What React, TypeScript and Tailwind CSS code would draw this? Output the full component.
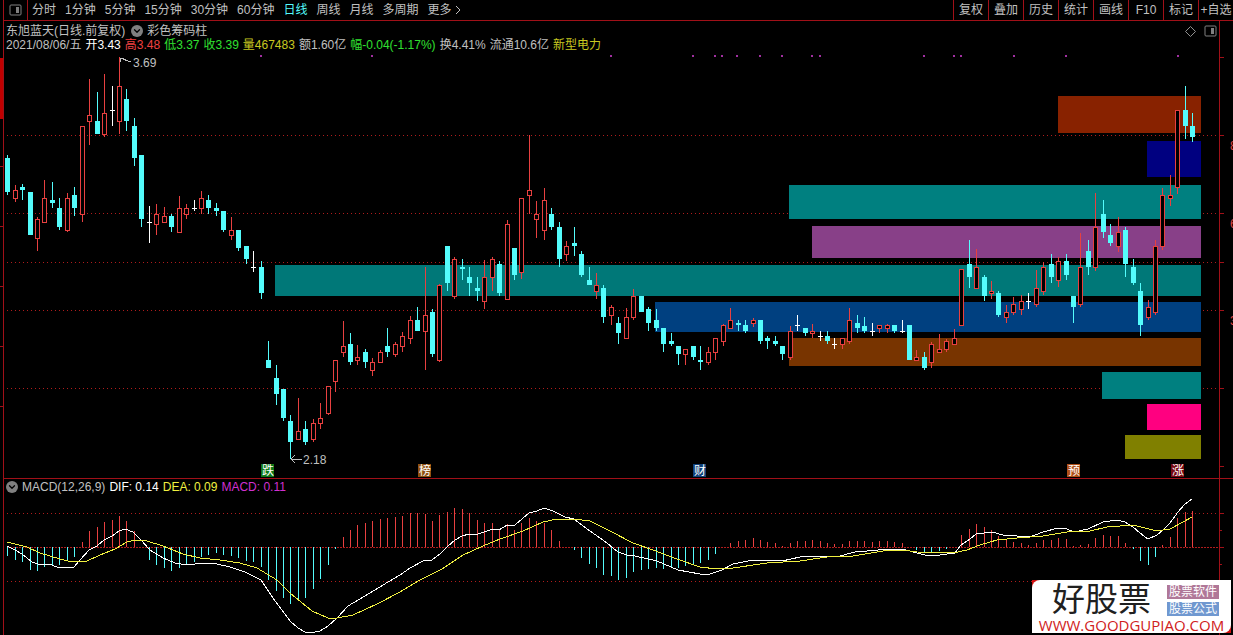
import React from 'react';
import { ChevronDown } from 'lucide-react';

type Kind = 'r' | 'c' | 'w';
// kind, high, low, body top, body bottom (for 'w' both body values are the cross line)
type Candle = [Kind, number, number, number, number];

const CANDLES: Candle[] = [
  ['c', 155, 195, 158, 192], ['r', 185, 202, 190, 199], ['c', 184, 200, 187, 190], ['c', 192, 235, 192, 235],
  ['r', 217, 251, 219, 239], ['r', 180, 223, 198, 223], ['c', 182, 208, 200, 203], ['c', 198, 230, 208, 227],
  ['r', 193, 232, 198, 231], ['c', 187, 216, 195, 208], ['r', 126, 222, 126, 215], ['r', 79, 145, 115, 122],
  ['c', 92, 134, 121, 134], ['r', 74, 137, 113, 135], ['w', 86, 126, 110, 110], ['r', 57, 134, 86, 122],
  ['c', 89, 131, 99, 121], ['c', 118, 166, 126, 158], ['c', 155, 227, 155, 219], ['w', 206, 243, 222, 222],
  ['r', 204, 235, 214, 225], ['r', 207, 223, 216, 223], ['c', 214, 232, 216, 227], ['r', 196, 233, 208, 233],
  ['r', 204, 219, 208, 215], ['w', 200, 211, 208, 208], ['r', 191, 214, 198, 209], ['c', 195, 214, 200, 208],
  ['c', 203, 216, 208, 211], ['c', 211, 232, 211, 230], ['r', 217, 240, 230, 236], ['c', 230, 251, 230, 248],
  ['c', 246, 264, 246, 259], ['w', 251, 272, 267, 267], ['c', 261, 299, 267, 293], ['c', 341, 368, 360, 368],
  ['c', 365, 405, 378, 394], ['c', 389, 421, 389, 418], ['c', 415, 459, 421, 442], ['r', 398, 440, 431, 440],
  ['c', 421, 445, 429, 442], ['r', 419, 442, 423, 440], ['r', 403, 429, 418, 424], ['r', 386, 415, 386, 414],
  ['r', 360, 392, 360, 382], ['r', 321, 357, 346, 353], ['c', 333, 365, 344, 362], ['r', 345, 365, 357, 361],
  ['c', 349, 368, 352, 362], ['r', 358, 376, 362, 371], ['r', 350, 363, 352, 363], ['c', 328, 357, 346, 352],
  ['r', 342, 357, 344, 355], ['r', 332, 352, 336, 347], ['r', 316, 344, 320, 339], ['c', 307, 331, 320, 331],
  ['r', 267, 370, 315, 332], ['c', 309, 357, 312, 354], ['r', 284, 362, 285, 361], ['c', 246, 291, 246, 283],
  ['r', 257, 299, 259, 297], ['c', 259, 280, 267, 269], ['c', 267, 296, 277, 283], ['c', 277, 301, 288, 291],
  ['r', 260, 309, 277, 302], ['r', 257, 291, 259, 278], ['c', 261, 296, 264, 293], ['r', 220, 300, 224, 300],
  ['c', 248, 280, 248, 275], ['r', 198, 279, 198, 273], ['r', 135, 214, 190, 196], ['r', 201, 238, 214, 220],
  ['r', 188, 240, 200, 231], ['c', 208, 230, 214, 227], ['c', 222, 267, 227, 259], ['r', 241, 261, 246, 255],
  ['c', 227, 256, 243, 246], ['c', 251, 277, 254, 275], ['c', 267, 285, 280, 285], ['r', 273, 299, 285, 292],
  ['c', 285, 323, 288, 317], ['r', 305, 325, 307, 316], ['c', 317, 344, 323, 333], ['r', 308, 339, 317, 339],
  ['r', 289, 320, 296, 318], ['c', 296, 312, 296, 312], ['c', 307, 331, 309, 323], ['c', 309, 331, 320, 328],
  ['c', 328, 352, 328, 344], ['c', 333, 346, 341, 344], ['c', 346, 365, 346, 354], ['r', 349, 365, 349, 355],
  ['c', 346, 360, 346, 357], ['c', 346, 370, 360, 362], ['r', 347, 365, 352, 363], ['r', 338, 360, 338, 353],
  ['r', 324, 346, 325, 342], ['r', 308, 329, 320, 329], ['c', 320, 331, 323, 325], ['c', 320, 333, 325, 331],
  ['r', 318, 327, 320, 324], ['c', 320, 344, 320, 341], ['c', 336, 349, 338, 341], ['c', 336, 346, 341, 344],
  ['c', 346, 360, 346, 354], ['r', 326, 360, 331, 358], ['w', 315, 331, 325, 325], ['c', 328, 336, 328, 333],
  ['r', 324, 338, 331, 334], ['w', 331, 341, 336, 336], ['c', 331, 344, 336, 341], ['w', 338, 349, 344, 344],
  ['r', 338, 349, 338, 345], ['r', 308, 344, 320, 342], ['c', 315, 333, 323, 328], ['c', 317, 333, 326, 331],
  ['w', 323, 336, 331, 331], ['r', 325, 333, 325, 329], ['r', 324, 333, 325, 329], ['c', 325, 333, 325, 331],
  ['w', 320, 333, 331, 331], ['c', 325, 360, 325, 360], ['r', 350, 361, 357, 361], ['c', 352, 370, 357, 368],
  ['r', 342, 368, 344, 363], ['r', 334, 353, 349, 353], ['r', 339, 352, 341, 350], ['r', 329, 345, 338, 345],
  ['r', 269, 326, 269, 326], ['c', 240, 288, 264, 277], ['r', 249, 289, 267, 289], ['c', 275, 301, 277, 296],
  ['r', 281, 299, 291, 294], ['c', 291, 317, 293, 315], ['r', 305, 323, 312, 318], ['r', 297, 315, 304, 313],
  ['r', 295, 315, 301, 310], ['w', 293, 309, 301, 301], ['r', 270, 307, 288, 305], ['r', 262, 295, 267, 292],
  ['c', 254, 283, 264, 277], ['r', 257, 287, 261, 281], ['c', 254, 280, 261, 275], ['c', 296, 323, 296, 307],
  ['r', 233, 307, 267, 305], ['c', 240, 275, 251, 267], ['r', 193, 271, 227, 268], ['c', 200, 238, 214, 232],
  ['c', 224, 246, 235, 243], ['r', 217, 252, 232, 247], ['c', 227, 277, 230, 264], ['c', 259, 285, 267, 283],
  ['c', 283, 336, 291, 325], ['r', 300, 320, 307, 318], ['r', 240, 315, 246, 313], ['r', 188, 250, 195, 247],
  ['r', 175, 206, 195, 199], ['r', 110, 194, 110, 188], ['c', 86, 139, 110, 126], ['c', 113, 142, 126, 137],
];

// chip distribution bars, all of them end at x = 1201
const CHIPS = [
  { x: 1058, y: 96, h: 37, fill: '#882200' },
  { x: 1147, y: 141, h: 36, fill: '#000080' },
  { x: 789, y: 185, h: 34, fill: '#008080' },
  { x: 812, y: 226, h: 32, fill: '#884088' },
  { x: 275, y: 265, h: 31, fill: '#007878' },
  { x: 655, y: 302, h: 30, fill: '#004080' },
  { x: 789, y: 338, h: 28, fill: '#783400' },
  { x: 1102, y: 372, h: 27, fill: '#008080' },
  { x: 1147, y: 404, h: 26, fill: '#ff0080' },
  { x: 1125, y: 435, h: 24, fill: '#808000' },
];

const MARKERS = [
  { x: 261, label: '跌', fill: '#107818' },
  { x: 418, label: '榜', fill: '#905010' },
  { x: 693, label: '财', fill: '#104078' },
  { x: 1067, label: '预', fill: '#b05018' },
  { x: 1171, label: '涨', fill: '#780810' },
];

const SIGNALS = [261, 372, 611, 693, 715, 722, 737, 760, 782, 812, 820, 924, 954, 961, 1014, 1066, 1178];

const ZERO = 547;
// end of every MACD bar, the other end sits on the zero line
const BARS = [
  556, 560, 562, 570, 571, 567, 566, 565, 560, 557, 542, 531, 527, 522, 520, 516, 521, 531, 547, 560,
  565, 568, 571, 568, 565, 562, 557, 555, 553, 555, 556, 558, 561, 562, 567, 580, 591, 598, 604, 600,
  598, 589, 579, 565, 549, 537, 530, 525, 523, 521, 519, 518, 517, 516, 513, 513, 514, 521, 515, 512,
  508, 509, 513, 520, 523, 523, 529, 524, 530, 523, 518, 521, 523, 530, 541, 547, 550, 558, 564, 568,
  575, 576, 580, 578, 572, 570, 569, 568, 569, 568, 568, 566, 565, 563, 560, 554, 547, 543, 541, 540,
  538, 540, 542, 543, 546, 543, 541, 541, 540, 541, 543, 544, 544, 541, 541, 541, 542, 541, 541, 542,
  543, 547, 550, 553, 552, 551, 549, 547, 535, 529, 524, 527, 530, 536, 540, 542, 543, 545, 543, 540,
  540, 538, 539, 546, 545, 544, 538, 535, 536, 536, 543, 549, 561, 565, 557, 545, 537, 518, 512, 511,
];

const DIF =
  '7,546 15,550 22,554 32,562 38,564 52,565 59,568 74,567 80,560 89,550 97,546 104,540 112,536 119,531 125,529 133,532 140,539 150,550 163,558 175,563 187,565 203,563 217,564 230,567 245,572 261,580 273,598 290,621 298,628 305,632 315,632 320,631 328,626 337,618 348,606 370,593 388,582 400,575 410,568 425,560 432,560 440,554 447,547 455,540 462,536 469,534 478,534 493,529 499,530 507,525 515,525 529,513 537,511 544,508 553,511 565,517 574,519 583,526 607,543 618,552 627,555 635,556 657,561 678,570 700,574 710,574 722,570 733,564 753,560 782,561 800,557 840,556 855,552 890,549 902,549 925,555 940,555 955,553 961,545 970,539 976,534 992,532 1003,535 1030,537 1043,532 1058,528 1067,529 1074,532 1088,529 1103,522 1117,520 1125,522 1133,527 1140,533 1148,539 1157,535 1163,530 1170,523 1178,512 1185,504 1192,499';

const DEA =
  '7,542 27,547 40,553 60,559 72,562 87,561 100,555 115,549 127,542 135,540 147,541 163,546 183,554 200,558 220,560 240,563 257,568 277,580 290,593 312,611 328,618 337,618 353,615 377,604 400,592 420,580 442,569 463,555 483,546 500,539 523,531 543,522 557,519 573,519 590,521 610,531 633,543 653,550 677,559 700,567 717,569 733,568 767,563 800,561 827,557 853,556 883,551 903,550 917,552 953,553 967,550 980,545 997,540 1017,538 1043,536 1067,532 1090,531 1107,527 1133,525 1157,531 1170,529 1183,522 1192,517';

const COLORS = { r: '#e84040', c: '#54fcfc', w: '#ffffff' };

const PERIODS = ['分时', '1分钟', '5分钟', '15分钟', '30分钟', '60分钟', '日线', '周线', '月线', '多周期'];
const TOOLS = ['复权', '叠加', '历史', '统计', '画线', 'F10', '标记'];

const QUOTE = [
  { text: '2021/08/06/五', color: 'text-[#c0c0c0]' },
  { text: '开3.43', color: 'text-white' },
  { text: '高3.48', color: 'text-[#f04040]' },
  { text: '低3.37', color: 'text-[#30e030]' },
  { text: '收3.39', color: 'text-[#30e030]' },
  { text: '量467483', color: 'text-[#c8c820]' },
  { text: '额1.60亿', color: 'text-[#c0c0c0]' },
  { text: '幅-0.04(-1.17%)', color: 'text-[#30e030]' },
  { text: '换4.41%', color: 'text-[#c0c0c0]' },
  { text: '流通10.6亿', color: 'text-[#c0c0c0]' },
  { text: '新型电力', color: 'text-[#c8c820]' },
];

const xOf = (i: number) => Math.round(7.2 + 7.453 * i);

const PanelIcon: React.FC = () => (
  <svg viewBox="0 0 13 12" className="h-3 w-[13px]" aria-hidden="true">
    <rect x="1" y="1" width="11" height="10" rx="1" fill="none" stroke="#808080" />
    <rect x="7" y="3" width="3" height="6" fill="#808080" />
  </svg>
);

const ToggleButton: React.FC<{ label: string }> = ({ label }) => (
  <button aria-label={label} className="flex h-3 w-3 items-center justify-center rounded-full bg-[#808080] text-black">
    <ChevronDown className="h-[10px] w-[10px]" strokeWidth={3} />
  </button>
);

const GridLines: React.FC<{ rows: number[] }> = ({ rows }) => (
  <g stroke="#b01c1c">
    {rows.map(y => (
      <line key={y} x1="7" x2="1219" y1={y} y2={y} strokeDasharray="1 3" />
    ))}
  </g>
);

const CandleShape: React.FC<{ candle: Candle; x: number }> = ({ candle, x }) => {
  const [kind, high, low, top, bottom] = candle;
  const fill = COLORS[kind];

  return (
    <g fill={fill}>
      <rect x={x} y={high} width="1" height={low - high} />
      {kind === 'w' ? (
        <rect x={x - 2} y={top} width="5" height="1" />
      ) : (
        <rect x={x - 2} y={top} width="5" height={bottom - top} />
      )}
      {kind === 'r' && <rect x={x - 1} y={top + 1} width="3" height={bottom - top - 2} fill="#000" />}
    </g>
  );
};

const PriceChart: React.FC = () => (
  <svg viewBox="4 52 1215 426" className="block h-auto w-full" shapeRendering="crispEdges" role="img" aria-label="日线">
    <GridLines rows={[135, 213, 262, 310, 388]} />
    {CHIPS.map(c => (
      <rect key={c.y} x={c.x} y={c.y} width={1201 - c.x} height={c.h} fill={c.fill} />
    ))}
    {SIGNALS.map(x => (
      <rect key={x} x={x - 1} y="55" width="2" height="2" fill="#a030a0" />
    ))}
    {CANDLES.map((c, i) => (
      <CandleShape key={i} candle={c} x={xOf(i)} />
    ))}

    {/* Highest and lowest price */}
    <g fill="none" stroke="#c0c0c0">
      <path d="M120 62V58H124M120 58L131 62" />
      <path d="M302 459H291M295 455L291 459L295 463" />
    </g>
    <g fill="#c0c0c0" fontSize="12">
      <text x="133" y="67">3.69</text>
      <text x="303" y="464">2.18</text>
    </g>

    {MARKERS.map(m => (
      <g key={m.label}>
        <rect x={m.x} y="464" width="13" height="13" fill={m.fill} />
        <text x={m.x + 1} y="475" fontSize="12" fill="#fff">{m.label}</text>
      </g>
    ))}
  </svg>
);

const MacdChart: React.FC = () => (
  <svg viewBox="4 495 1215 140" className="block h-auto w-full" shapeRendering="crispEdges" role="img" aria-label="MACD">
    <GridLines rows={[513, 581]} />
    <line x1="7" x2="1219" y1={ZERO} y2={ZERO} stroke="#b01c1c" strokeDasharray="2 1" />
    {BARS.map((end, i) => (
      <rect
        key={i}
        x={xOf(i)}
        y={Math.min(end, ZERO)}
        width="1"
        height={Math.abs(end - ZERO)}
        fill={end < ZERO ? COLORS.r : COLORS.c}
      />
    ))}
    <polyline points={DIF} fill="none" stroke="#fff" />
    <polyline points={DEA} fill="none" stroke="#f0f040" />
  </svg>
);

const Logo: React.FC = () => (
  <a href="#" className="absolute right-[2px] bottom-[2px] bg-[#d01010]">
    <div className="flex h-[53px] w-[199px] flex-col rounded-tl-lg rounded-br-lg bg-white">
      <div className="flex h-9 items-center justify-between pt-1 pr-3 pl-5">
        <span className="text-[33px] leading-9 text-[#202020]">好股票</span>
        <span className="flex flex-col gap-[3px] text-[12px] leading-[14px] text-white">
          <span className="bg-[#b07898] px-[2px]">股票软件</span>
          <span className="bg-[#7098d0] px-[2px]">股票公式</span>
        </span>
      </div>
      <span className="text-center font-['Open_Sans','Noto_Sans',sans-serif] text-[15px] leading-[18px] text-[#d02020]">
        WWW.GOODGUPIAO.COM
      </span>
    </div>
  </a>
);

export default function App() {
  return (
    <div className="relative flex min-h-screen overflow-hidden bg-black font-['Liberation_Sans','Noto_Sans_CJK_SC',sans-serif] text-xs text-[#c0c0c0]">
      {/* Left rail */}
      <div className="flex w-1 shrink-0 flex-col gap-[47px] border-r border-[#a01018] pt-[58px]">
        <div className="h-[61px] bg-[#c00000]" />
        <div className="flex flex-col gap-[59px]">
          {[0, 1, 2, 3, 4].map(t => (
            <div key={t} className="h-px bg-[#a01018]" />
          ))}
        </div>
      </div>

      <div className="flex min-w-0 flex-1 flex-col">
        <nav className="flex h-[21px] border-b border-[#a01018]">
          <button aria-label="面板" className="flex w-6 shrink-0 items-center justify-center border-r border-[#a01018]">
            <PanelIcon />
          </button>
          <div className="flex flex-1 items-center gap-[9px] overflow-hidden pl-1 whitespace-nowrap">
            {PERIODS.map(p => (
              <button key={p} className={p === '日线' ? 'text-[#54fcfc]' : ''}>{p}</button>
            ))}
            <button className="flex items-center gap-[3px]">
              更多
              <svg viewBox="0 0 6 10" className="h-[10px] w-[6px]" aria-hidden="true">
                <path d="M1 1l4 4-4 4" fill="none" stroke="currentColor" />
              </svg>
            </button>
          </div>
          <div className="flex shrink-0 whitespace-nowrap">
            {TOOLS.map(t => (
              <button key={t} className="w-[35px] border-l border-[#a01018]">{t}</button>
            ))}
            <button className="w-[35px] border-l border-[#a01018]">+自选</button>
          </div>
        </nav>

        {/* Price */}
        <section className="flex border-b border-[#a01018]">
          <div className="min-w-0 flex-1">
            <header className="h-[31px] pt-[3px] pl-[2px] whitespace-nowrap">
              <div className="flex h-[14px] items-center gap-[6px]">
                <h1>东旭蓝天(日线.前复权)</h1>
                <ToggleButton label="切换指标" />
                <span className="-ml-[2px]">彩色筹码柱</span>
                <span className="ml-auto flex items-center gap-2 pr-[2px]">
                  <svg viewBox="0 0 11 11" className="h-[11px] w-[11px]" aria-hidden="true">
                    <path d="M5.5 .5l5 5-5 5-5-5z" fill="none" stroke="#909090" />
                  </svg>
                  <PanelIcon />
                </span>
              </div>
              <div className="flex h-[14px] items-center gap-1">
                {QUOTE.map(q => (
                  <span key={q.text} className={q.color}>{q.text}</span>
                ))}
              </div>
            </header>
            <PriceChart />
          </div>
          <svg viewBox="1219 21 14 457" className="w-[14px] shrink-0" shapeRendering="crispEdges" aria-hidden="true">
            <g fill="#a01018">
              <rect x="1219" y="21" width="1" height="457" />
              {[57, 135, 213, 262, 310, 388, 466].map(y => (
                <rect key={y} x="1219" y={y} width="5" height="1" />
              ))}
            </g>
            <g fill="#e04040" fontSize="12">
              <text x="1230" y="150">8</text>
              <text x="1230" y="228">6</text>
              <text x="1230" y="325">3</text>
            </g>
          </svg>
        </section>

        {/* MACD */}
        <section className="flex">
          <div className="min-w-0 flex-1">
            <header className="flex h-4 items-center gap-1 pl-[2px] whitespace-nowrap">
              <ToggleButton label="切换副图" />
              <span>MACD(12,26,9)</span>
              <span className="text-white">DIF: 0.14</span>
              <span className="text-[#f0f040]">DEA: 0.09</span>
              <span className="text-[#d030d0]">MACD: 0.11</span>
            </header>
            <MacdChart />
          </div>
          <svg viewBox="1219 479 14 156" className="w-[14px] shrink-0" shapeRendering="crispEdges" aria-hidden="true">
            <g fill="#a01018">
              <rect x="1219" y="479" width="1" height="156" />
              <rect x="1219" y="513" width="5" height="1" />
              <rect x="1219" y="530" width="3" height="1" />
              <rect x="1219" y="547" width="5" height="1" />
              <rect x="1219" y="564" width="3" height="1" />
            </g>
          </svg>
        </section>
      </div>

      <Logo />
    </div>
  );
}
